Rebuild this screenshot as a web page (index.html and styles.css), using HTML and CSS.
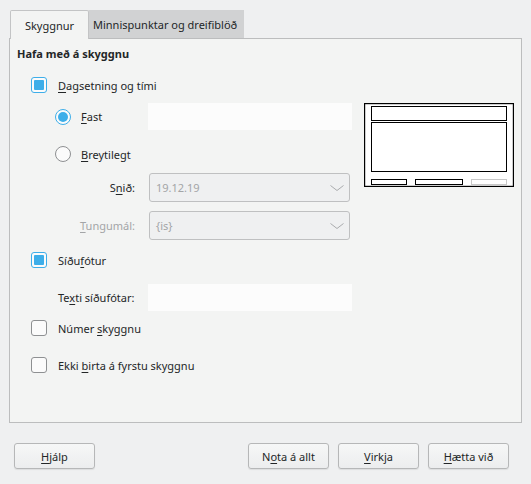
FILE: index.html
```html
<!DOCTYPE html>
<html lang="is">
<head>
<meta charset="utf-8">
<title>Haus og fótur</title>
<link rel="stylesheet" href="styles.css">
</head>
<body>
<div class="dialog">
  <div class="tabs">
    <div class="tab active">Skyggnur</div>
    <div class="tab">Minnispunktar og dreifiblöð</div>
  </div>
  <div class="panel">
    <div class="form">
      <div class="heading">Hafa með á skyggnu</div>
      <div class="row r-date"><span class="check on"></span><span class="clbl"><u>D</u>agsetning og tími</span></div>
      <div class="row r-fast"><span class="radio on"></span><span class="rlbl"><u>F</u>ast</span><span class="field"></span></div>
      <div class="row r-var"><span class="radio"></span><span class="rlbl"><u>B</u>reytilegt</span></div>
      <div class="row r-fmt"><span class="flbl">S<u>n</u>ið:</span><span class="combo"><span>19.12.19</span><svg class="chev" width="14" height="6" viewBox="0 0 14 6"><polyline points="0.5,0.5 7,5.5 13.5,0.5" fill="none" stroke="#a9abad" stroke-width="1"/></svg></span></div>
      <div class="row r-lang"><span class="flbl dis"><u>T</u>ungumál:</span><span class="combo"><span>{is}</span><svg class="chev" width="14" height="6" viewBox="0 0 14 6"><polyline points="0.5,0.5 7,5.5 13.5,0.5" fill="none" stroke="#a9abad" stroke-width="1"/></svg></span></div>
      <div class="row r-foot"><span class="check on"></span><span class="clbl">Síðu<u>f</u>ótur</span></div>
      <div class="row r-ftext"><span class="tlbl">Te<u>x</u>ti síðufótar:</span><span class="field"></span></div>
      <div class="row r-num"><span class="check"></span><span class="clbl">Númer <u>s</u>kyggnu</span></div>
      <div class="row r-first"><span class="check"></span><span class="clbl">Ekki <u>b</u>irta á fyrstu skyggnu</span></div>
    </div>
    <div class="preview">
      <svg width="150" height="84" viewBox="0 0 150 84">
        <rect x="0.6" y="0.6" width="148.8" height="82.8" fill="#fff" stroke="#000" stroke-width="1.2"/>
        <rect x="7.5" y="3.5" width="135" height="14" fill="none" stroke="#000" stroke-width="1"/>
        <rect x="7.5" y="19.5" width="135" height="49" fill="none" stroke="#000" stroke-width="1"/>
        <rect x="7.5" y="76.5" width="35" height="5" fill="none" stroke="#000" stroke-width="1"/>
        <rect x="51.5" y="76.5" width="47" height="5" fill="none" stroke="#000" stroke-width="1"/>
        <rect x="107.5" y="76.5" width="35" height="5" fill="none" stroke="#c8c8c8" stroke-width="1"/>
      </svg>
    </div>
  </div>
  <div class="buttons">
    <button class="btn"><u>H</u>jálp</button>
    <span class="spacer"></span>
    <button class="btn">N<u>o</u>ta á allt</button>
    <button class="btn"><u>V</u>irkja</button>
    <button class="btn"><u>H</u>ætta við</button>
  </div>
</div>
</body>
</html>
```
FILE: styles.css
```css
html, body {
  margin: 0;
  padding: 0;
}
body {
  width: 531px;
  height: 484px;
  background: #eff0f1;
  font-family: "Noto Sans", "DejaVu Sans", sans-serif;
  font-size: 11px;
  color: #232627;
  overflow: hidden;
}
u {
  text-decoration-thickness: 1px;
  text-underline-offset: 2px;
}
.dialog {
  display: flex;
  flex-direction: column;
}
.tabs {
  display: flex;
  padding: 10px 0 0 10px;
  height: 28px;
}
.tab {
  height: 28px;
  box-sizing: border-box;
  display: flex;
  align-items: center;
  padding: 0 5px;
  background: #d1d2d3;
  white-space: nowrap;
}
.tab.active {
  width: 79px;
  justify-content: center;
  background: #f3f4f3;
  border: 1px solid #c3c4c5;
  border-bottom: none;
  border-radius: 2px 2px 0 0;
  position: relative;
  z-index: 1;
  height: 29px;
}
.tab:not(.active) {
  width: 155px;
  padding-left: 4px;
}
.panel {
  margin: 0 9px;
  width: 513px;
  height: 385px;
  box-sizing: border-box;
  background: #f3f4f3;
  border: 1px solid #bcbdbe;
  display: flex;
  align-items: flex-start;
}
.form {
  width: 342px;
  display: flex;
  flex-direction: column;
}
.heading {
  height: 28px;
  display: flex;
  align-items: center;
  padding-left: 7px;
  font-weight: bold;
}
.row {
  display: flex;
  align-items: center;
  height: 28px;
}
.r-date { height: 36px; padding-left: 21px; }
.r-fast { height: 27px; padding-left: 45px; }
.r-var { margin-top: 10px; padding-left: 45px; }
.r-fmt { margin-top: 5px; height: 29px; }
.r-lang { margin-top: 9px; height: 29px; }
.r-foot { margin-top: 6px; padding-left: 21px; }
.r-ftext { margin-top: 10px; height: 27px; padding-left: 48px; }
.r-num { margin-top: 3px; padding-left: 21px; }
.r-first { margin-top: 9px; padding-left: 21px; }

.check {
  width: 16px;
  height: 16px;
  box-sizing: border-box;
  border: 1px solid #8e9092;
  border-radius: 3px;
  background: #fbfbfb;
  display: flex;
  align-items: center;
  justify-content: center;
  flex: none;
}
.check.on {
  border-color: #3daee9;
}
.check.on::after {
  content: "";
  width: 10px;
  height: 10px;
  background: #3daee9;
  border-radius: 1px;
}
.clbl {
  margin-left: 11px;
}
.radio {
  width: 16px;
  height: 16px;
  box-sizing: border-box;
  border: 1px solid #8e9092;
  border-radius: 50%;
  background: #fbfbfb;
  display: flex;
  align-items: center;
  justify-content: center;
  flex: none;
}
.radio.on {
  border-color: #3daee9;
}
.radio.on::after {
  content: "";
  width: 10px;
  height: 10px;
  border-radius: 50%;
  background: #3daee9;
}
.rlbl {
  margin-left: 10px;
  width: 67px;
}
.field {
  width: 204px;
  height: 27px;
  background: #fcfcfc;
  flex: none;
}
.flbl {
  width: 125px;
  text-align: right;
  margin-right: 14px;
}
.flbl.dis {
  color: #a3a5a7;
}
.combo {
  width: 201px;
  height: 29px;
  box-sizing: border-box;
  border: 1px solid #bfc0c1;
  border-radius: 3px;
  background: #eff0f1;
  color: #a3a5a7;
  display: flex;
  align-items: center;
  justify-content: space-between;
  padding: 0 5px 0 6px;
}
.chev {
  display: block;
}
.tlbl {
  width: 90px;
}
.preview {
  margin: 64px 0 0 12px;
  line-height: 0;
}
.buttons {
  display: flex;
  margin-top: 20px;
  padding: 0 22px 0 14px;
  gap: 9px;
}
.spacer {
  flex: 1;
}
.btn {
  width: 81px;
  height: 26px;
  font: inherit;
  color: #232627;
  background: linear-gradient(#f6f7f7, #ecedee);
  border: 1px solid #b6b7b8;
  border-radius: 3px;
  box-shadow: 0 1px 1px rgba(0,0,0,0.08);
  padding: 0;
}
```
